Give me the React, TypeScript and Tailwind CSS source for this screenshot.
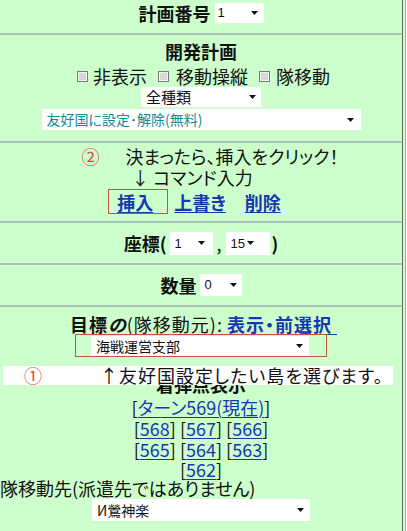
import React from "react";

function Arrow({ cls }: { cls: string }) {
  return (
    <svg className={cls} width="7" height="4" viewBox="0 0 7 4">
      <path d="M0 0H7L3.5 4Z" fill="#111" />
    </svg>
  );
}

function Sel({ box, text, textCls, arrowCls }: { box: string; text: string; textCls: string; arrowCls: string }) {
  return (
    <div className={`flex shrink-0 items-center bg-white ${box}`}>
      <span className={`whitespace-nowrap ${textCls}`}>{text}</span>
      <Arrow cls={`ml-auto shrink-0 ${arrowCls}`} />
    </div>
  );
}

function Cb({ cls }: { cls: string }) {
  return (
    <span className={`inline-block h-[11px] w-[11px] shrink-0 border border-[#7a7a7a] bg-[#d6d6d6] shadow-[inset_0_0_0_1px_#f4f4f4] ${cls}`} />
  );
}

function Sep() {
  return <div className="h-[2px] w-full shrink-0 bg-[#a9c4b8]" />;
}

function L({ children }: { children: React.ReactNode }) {
  return <a className="cursor-pointer text-[#1838b0] underline decoration-1 underline-offset-2">{children}</a>;
}

export default function App() {
  return (
    <div className="flex h-[531px] w-[407px] overflow-hidden bg-[#ccffcc] font-['Noto_Sans_CJK_JP',sans-serif] text-[#111] [font-feature-settings:'palt']">
      <div className="flex w-[402px] shrink-0 flex-col">
        {/* 計画番号 */}
        <div className="flex h-[33px] shrink-0 items-start justify-center pt-[3px]">
          <div className="flex h-[20px] items-center">
            <span className="text-[18px] font-bold leading-[20px]">計画番号</span>
            <Sel
              box="ml-[4px] h-[20px] w-[49px] pl-[3px]"
              text="1"
              textCls="font-['Liberation_Sans',sans-serif] text-[13px] leading-[20px]"
              arrowCls="mr-[6px]"
            />
          </div>
        </div>
        <Sep />

        {/* 開発計画 */}
        <div className="flex h-[106px] shrink-0 flex-col items-center pt-[6px]">
          <div className="h-[20px] text-[18px] font-bold leading-[20px]">開発計画</div>
          <div className="mt-[5px] flex h-[20px] items-center pl-[5px] text-[18px] leading-[20px]">
            <Cb cls="" />
            <span className="ml-[5px]">非表示</span>
            <Cb cls="ml-[11px]" />
            <span className="ml-[7px]">移動操縦</span>
            <Cb cls="ml-[11px]" />
            <span className="ml-[6px]">隊移動</span>
          </div>
          <Sel
            box="mt-[1px] h-[20px] w-[120px] pl-[5px]"
            text="全種類"
            textCls="text-[15px] leading-[20px]"
            arrowCls="mr-[5px]"
          />
          <Sel
            box="mt-[2px] h-[21px] w-[319px] pl-[5px]"
            text="友好国に設定･解除(無料)"
            textCls="text-[14px] leading-[21px] text-[#128a9a]"
            arrowCls="mr-[7px]"
          />
        </div>
        <Sep />

        {/* 挿入 */}
        <div className="flex h-[78px] shrink-0 flex-col items-center pt-[3px] text-[18px] leading-[20px]">
          <div className="flex h-[20px] pl-[18px]">
            <span className="text-[#e0463a]">②</span>
            <span className="ml-[26px] whitespace-nowrap">決まったら、挿入をクリック！</span>
          </div>
          <div className="mt-[1px] flex h-[20px] pr-[18px]">
            <span>↓</span>
            <span className="ml-[4px] whitespace-nowrap">コマンド入力</span>
          </div>
          <div className="mt-[2px] flex h-[25px] items-center pr-[13px] font-bold">
            <span className="flex h-[25px] w-[60px] items-center border border-[#c4543c] pl-[8px]">
              <L>挿入</L>
            </span>
            <span className="ml-[6px]">
              <L>上書き</L>
            </span>
            <span className="ml-[19px]">
              <L>削除</L>
            </span>
          </div>
        </div>
        <Sep />

        {/* 座標 */}
        <div className="flex h-[40px] shrink-0 items-center justify-center text-[18px] font-bold leading-[20px]">
          <span>座標(</span>
          <Sel
            box="ml-[4px] h-[23px] w-[43px] pl-[4px] font-normal"
            text="1"
            textCls="font-['Liberation_Sans',sans-serif] text-[13px] leading-[23px]"
            arrowCls="mr-[8px]"
          />
          <span className="ml-[3px] font-normal">,</span>
          <Sel
            box="ml-[4px] h-[23px] w-[44px] pl-[5px] font-normal"
            text="15"
            textCls="font-['Liberation_Sans',sans-serif] text-[13px] leading-[23px]"
            arrowCls="mr-[16px]"
          />
          <span className="ml-[2px]">)</span>
        </div>
        <Sep />

        {/* 数量 */}
        <div className="flex h-[40px] shrink-0 items-center justify-center text-[18px] font-bold leading-[20px]">
          <span>数量</span>
          <Sel
            box="ml-[3px] h-[22px] w-[42px] pl-[5px] font-normal"
            text="0"
            textCls="font-['Liberation_Sans',sans-serif] text-[13px] leading-[22px]"
            arrowCls="mr-[5px]"
          />
        </div>
        <Sep />

        {/* 目標 */}
        <div className="flex flex-1 flex-col items-center pt-[7px] text-[18px] leading-[20px]">
          <div className="flex h-[20px] whitespace-nowrap pl-[5px] tracking-[1px]">
            <span className="font-bold">
              目標<i>の</i>
            </span>
            <span>(隊移動元):</span>
            <span className="ml-[4px] font-bold">
              <L>表示・前選択&nbsp;</L>
            </span>
          </div>
          <div className="flex h-[23px] w-[252px] items-center border border-[#c4543c] pl-[15px]">
            <Sel
              box="h-[20px] w-[218px] pl-[5px]"
              text="海戦運営支部"
              textCls="text-[14px] leading-[20px]"
              arrowCls="mr-[6px]"
            />
          </div>
          <div className="relative z-10 mt-[9px] ml-[3px] flex h-[19px] w-[390px] items-center self-start bg-white leading-[19px]">
            <span className="ml-[21px] text-[#e0463a]">①</span>
            <span className="ml-[58px] whitespace-nowrap tracking-[1px]">↑友好国設定したい島を選びます。</span>
          </div>
          <div className="-mt-[11px] h-[20px] font-bold">着弾点表示</div>
          <div className="mt-[3px] h-[21px] whitespace-nowrap leading-[21px]">
            [<L>ターン569(現在)</L>]
          </div>
          <div className="h-[21px] whitespace-nowrap leading-[21px]">
            [<L>568</L>] [<L>567</L>] [<L>566</L>]
          </div>
          <div className="h-[21px] whitespace-nowrap leading-[21px]">
            [<L>565</L>] [<L>564</L>] [<L>563</L>]
          </div>
          <div className="h-[18px] whitespace-nowrap leading-[18px]">
            [<L>562</L>]
          </div>
          <div className="h-[20px] w-full whitespace-nowrap text-left">隊移動先(派遣先ではありません)</div>
          <Sel
            box="mt-[1px] h-[22px] w-[218px] pl-[5px]"
            text="И鶯神楽"
            textCls="text-[14px] leading-[22px]"
            arrowCls="mr-[6px]"
          />
        </div>
      </div>
      <div className="w-px shrink-0 bg-[#666666]" />
      <div className="w-[2px] shrink-0" />
      <div className="w-px shrink-0 bg-[#a8a8a8]" />
      <div className="w-px shrink-0 bg-white" />
    </div>
  );
}
